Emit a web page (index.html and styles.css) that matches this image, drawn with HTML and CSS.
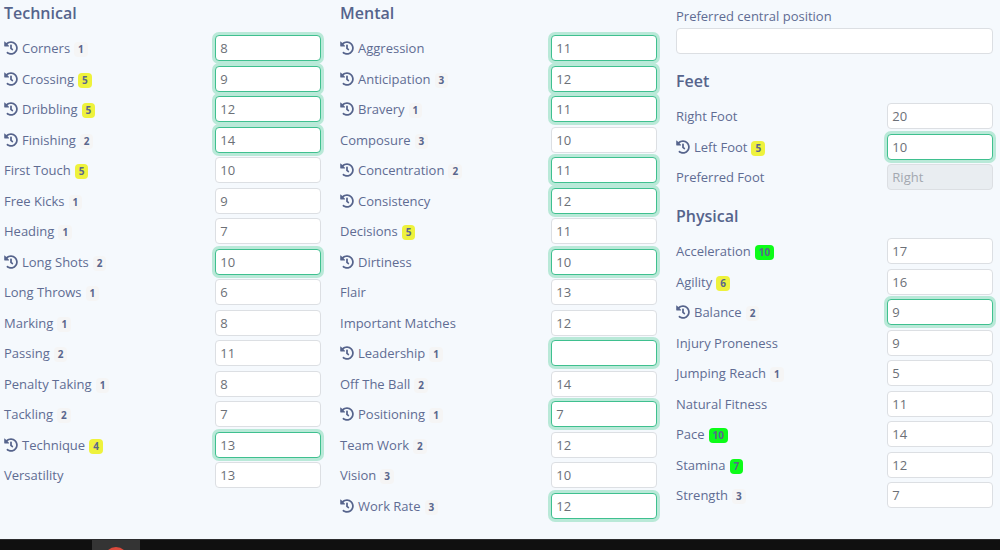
FILE: index.html
```
<!DOCTYPE html>
<html lang="en">
<head>
<meta charset="utf-8">
<title>Player attributes</title>
<link rel="stylesheet" href="styles.css">
</head>
<body>
<svg class="sprite" aria-hidden="true">
  <symbol id="history" viewBox="0 0 512 512">
    <path fill="currentColor" d="M504 255.531c.253 136.64-111.18 248.372-247.82 248.468-59.015.042-113.223-20.53-155.822-54.911-11.077-8.94-11.905-25.541-1.839-35.607l11.267-11.267c8.609-8.609 22.353-9.551 31.891-1.984C173.062 425.135 212.781 440 256 440c101.705 0 184-82.311 184-184 0-101.705-82.311-184-184-184-48.814 0-93.149 18.969-126.068 49.932l50.754 50.754c10.08 10.08 2.941 27.314-11.313 27.314H24c-8.837 0-16-7.163-16-16V38.627c0-14.254 17.234-21.393 27.314-11.314l49.372 49.372C129.209 34.136 189.552 8 256 8c136.81 0 247.747 110.78 248 247.531zm-180.912 78.784l9.823-12.63c8.138-10.463 6.253-25.542-4.21-33.679L288 256.349V152c0-13.255-10.745-24-24-24h-16c-13.255 0-24 10.745-24 24v135.651l65.409 50.874c10.463 8.137 25.541 6.253 33.679-4.21z"/>
  </symbol>
</svg>
<main class="attributes">
  <section class="column">
    <h2 class="heading">Technical</h2>
    <ul class="list">
      <li class="row"><label class="label" for="corners"><svg class="icon"><use href="#history"/></svg>Corners<span class="badge">1</span></label><input class="field changed" id="corners" value="8"></li>
      <li class="row"><label class="label" for="crossing"><svg class="icon"><use href="#history"/></svg>Crossing<span class="badge mid">5</span></label><input class="field changed" id="crossing" value="9"></li>
      <li class="row"><label class="label" for="dribbling"><svg class="icon"><use href="#history"/></svg>Dribbling<span class="badge mid">5</span></label><input class="field changed" id="dribbling" value="12"></li>
      <li class="row"><label class="label" for="finishing"><svg class="icon"><use href="#history"/></svg>Finishing<span class="badge">2</span></label><input class="field changed" id="finishing" value="14"></li>
      <li class="row"><label class="label" for="first-touch">First Touch<span class="badge mid">5</span></label><input class="field" id="first-touch" value="10"></li>
      <li class="row"><label class="label" for="free-kicks">Free Kicks<span class="badge">1</span></label><input class="field" id="free-kicks" value="9"></li>
      <li class="row"><label class="label" for="heading">Heading<span class="badge">1</span></label><input class="field" id="heading" value="7"></li>
      <li class="row"><label class="label" for="long-shots"><svg class="icon"><use href="#history"/></svg>Long Shots<span class="badge">2</span></label><input class="field changed" id="long-shots" value="10"></li>
      <li class="row"><label class="label" for="long-throws">Long Throws<span class="badge">1</span></label><input class="field" id="long-throws" value="6"></li>
      <li class="row"><label class="label" for="marking">Marking<span class="badge">1</span></label><input class="field" id="marking" value="8"></li>
      <li class="row"><label class="label" for="passing">Passing<span class="badge">2</span></label><input class="field" id="passing" value="11"></li>
      <li class="row"><label class="label" for="penalty-taking">Penalty Taking<span class="badge">1</span></label><input class="field" id="penalty-taking" value="8"></li>
      <li class="row"><label class="label" for="tackling">Tackling<span class="badge">2</span></label><input class="field" id="tackling" value="7"></li>
      <li class="row"><label class="label" for="technique"><svg class="icon"><use href="#history"/></svg>Technique<span class="badge mid">4</span></label><input class="field changed" id="technique" value="13"></li>
      <li class="row"><label class="label" for="versatility">Versatility</label><input class="field" id="versatility" value="13"></li>
    </ul>
  </section>
  <section class="column">
    <h2 class="heading">Mental</h2>
    <ul class="list">
      <li class="row"><label class="label" for="aggression"><svg class="icon"><use href="#history"/></svg>Aggression</label><input class="field changed" id="aggression" value="11"></li>
      <li class="row"><label class="label" for="anticipation"><svg class="icon"><use href="#history"/></svg>Anticipation<span class="badge">3</span></label><input class="field changed" id="anticipation" value="12"></li>
      <li class="row"><label class="label" for="bravery"><svg class="icon"><use href="#history"/></svg>Bravery<span class="badge">1</span></label><input class="field changed" id="bravery" value="11"></li>
      <li class="row"><label class="label" for="composure">Composure<span class="badge">3</span></label><input class="field" id="composure" value="10"></li>
      <li class="row"><label class="label" for="concentration"><svg class="icon"><use href="#history"/></svg>Concentration<span class="badge">2</span></label><input class="field changed" id="concentration" value="11"></li>
      <li class="row"><label class="label" for="consistency"><svg class="icon"><use href="#history"/></svg>Consistency</label><input class="field changed" id="consistency" value="12"></li>
      <li class="row"><label class="label" for="decisions">Decisions<span class="badge mid">5</span></label><input class="field" id="decisions" value="11"></li>
      <li class="row"><label class="label" for="dirtiness"><svg class="icon"><use href="#history"/></svg>Dirtiness</label><input class="field changed" id="dirtiness" value="10"></li>
      <li class="row"><label class="label" for="flair">Flair</label><input class="field" id="flair" value="13"></li>
      <li class="row"><label class="label" for="important-matches">Important Matches</label><input class="field" id="important-matches" value="12"></li>
      <li class="row"><label class="label" for="leadership"><svg class="icon"><use href="#history"/></svg>Leadership<span class="badge">1</span></label><input class="field changed" id="leadership" value=""></li>
      <li class="row"><label class="label" for="off-the-ball">Off The Ball<span class="badge">2</span></label><input class="field" id="off-the-ball" value="14"></li>
      <li class="row"><label class="label" for="positioning"><svg class="icon"><use href="#history"/></svg>Positioning<span class="badge">1</span></label><input class="field changed" id="positioning" value="7"></li>
      <li class="row"><label class="label" for="team-work">Team Work<span class="badge">2</span></label><input class="field" id="team-work" value="12"></li>
      <li class="row"><label class="label" for="vision">Vision<span class="badge">3</span></label><input class="field" id="vision" value="10"></li>
      <li class="row"><label class="label" for="work-rate"><svg class="icon"><use href="#history"/></svg>Work Rate<span class="badge">3</span></label><input class="field changed" id="work-rate" value="12"></li>
    </ul>
  </section>
  <section class="column">
    <div class="position">
      <label class="label" for="central-position">Preferred central position</label>
      <input class="field" id="central-position" value="">
    </div>
    <h2 class="heading">Feet</h2>
    <ul class="list">
      <li class="row"><label class="label" for="right-foot">Right Foot</label><input class="field" id="right-foot" value="20"></li>
      <li class="row"><label class="label" for="left-foot"><svg class="icon"><use href="#history"/></svg>Left Foot<span class="badge mid">5</span></label><input class="field changed" id="left-foot" value="10"></li>
      <li class="row"><label class="label" for="preferred-foot">Preferred Foot</label><input class="field" id="preferred-foot" value="Right" disabled></li>
    </ul>
    <h2 class="heading">Physical</h2>
    <ul class="list">
      <li class="row"><label class="label" for="acceleration">Acceleration<span class="badge high">10</span></label><input class="field" id="acceleration" value="17"></li>
      <li class="row"><label class="label" for="agility">Agility<span class="badge mid">6</span></label><input class="field" id="agility" value="16"></li>
      <li class="row"><label class="label" for="balance"><svg class="icon"><use href="#history"/></svg>Balance<span class="badge">2</span></label><input class="field changed" id="balance" value="9"></li>
      <li class="row"><label class="label" for="injury-proneness">Injury Proneness</label><input class="field" id="injury-proneness" value="9"></li>
      <li class="row"><label class="label" for="jumping-reach">Jumping Reach<span class="badge">1</span></label><input class="field" id="jumping-reach" value="5"></li>
      <li class="row"><label class="label" for="natural-fitness">Natural Fitness</label><input class="field" id="natural-fitness" value="11"></li>
      <li class="row"><label class="label" for="pace">Pace<span class="badge high">10</span></label><input class="field" id="pace" value="14"></li>
      <li class="row"><label class="label" for="stamina">Stamina<span class="badge high">7</span></label><input class="field" id="stamina" value="12"></li>
      <li class="row"><label class="label" for="strength">Strength<span class="badge">3</span></label><input class="field" id="strength" value="7"></li>
    </ul>
  </section>
</main>
<footer class="taskbar"><div class="task"><span class="task-icon"></span></div></footer>
</body>
</html>
```
FILE: styles.css
```
* { box-sizing: border-box; }

body {
  display: flex;
  flex-direction: column;
  min-height: 100vh;
  margin: 0;
  background: #f5f9fd;
  color: #5f6c93;
  font: 13px/20px "Open Sans", "Noto Sans", sans-serif;
}

.sprite { display: none; }

.attributes {
  flex: 1;
  display: grid;
  grid-template-columns: repeat(3, 1fr);
  gap: 19px;
  padding: 0 7px 0 4px;
}

.heading {
  margin: 0 0 6px;
  color: #56648c;
  font-size: 16px;
  line-height: 27px;
  font-weight: 600;
}

.list {
  margin: 0;
  padding: 0;
  list-style: none;
}

.row {
  display: grid;
  grid-template-columns: 2fr 1fr;
  align-items: center;
  min-height: 30px;
}

.row:nth-child(odd) { margin-bottom: 1px; }

.label {
  display: flex;
  align-items: center;
}

.icon {
  width: 14px;
  height: 14px;
  margin-right: 4px;
  color: #56648c;
}

.badge {
  margin: 3px 0 0 4px;
  padding: 0 4px;
  border-radius: 4px;
  background: #f5f5f5;
  color: #5a668c;
  font-size: 10px;
  line-height: 15px;
  font-weight: 700;
}

.mid { background: #eef23c; }
.high { background: #0cfc18; }

.field {
  width: 100%;
  min-width: 0;
  height: 26px;
  padding: 0 4px;
  border: 1px solid #dcdfe3;
  border-radius: 4px;
  background: #fff;
  color: #6c7077;
  font: inherit;
}

.changed {
  border-color: #3fc08f;
  box-shadow: 0 0 0 3px #b9e9d8;
}

.field:disabled {
  background: #e9edf1;
  color: #a3a8b0;
}

.position {
  padding: 6px 0 14px;
}

.position .field { margin-top: 2px; }

.list + .heading { margin-top: 11px; }

.taskbar {
  height: 11px;
  padding-left: 92px;
  border-top: 1px solid #2c2c2e;
  background: #101010;
  overflow: hidden;
}

.task {
  display: flex;
  justify-content: center;
  width: 48px;
  height: 40px;
  padding-top: 7px;
  background: #343434;
}

.task-icon {
  width: 24px;
  height: 24px;
  border-radius: 50%;
  background: #dc4a3c;
}
```
